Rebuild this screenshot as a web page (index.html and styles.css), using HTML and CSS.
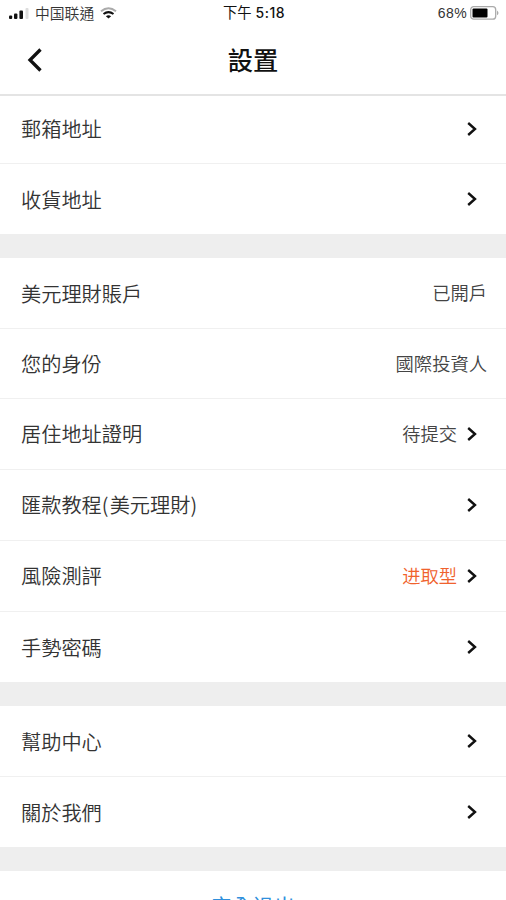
FILE: index.html
```html
<!DOCTYPE html>
<html lang="zh-Hant">
<head>
<meta charset="utf-8">
<title>設置</title>
<link rel="stylesheet" href="styles.css">
</head>
<body>
<svg class="defs" width="0" height="0"><symbol id="chev" viewBox="0 0 10 16"><path d="M1.200 2 8 8l-6.800 6" fill="none" stroke="#111" stroke-width="2.400"/></symbol></svg>
<div class="status">
  <div class="carrier">
    <svg class="signal" width="20" height="12" viewBox="0 0 20 12"><g fill="#111"><rect x="0" y="7.500" width="3.200" height="3.500" rx="1"/><rect x="5" y="5.500" width="3.400" height="5.500" rx="1"/><rect x="10.400" y="2.500" width="3.600" height="8.500" rx="1"/></g><rect x="16.500" y="0" width="3" height="11" rx="1" fill="#ddd"/></svg>
    <span class="name">中国联通</span>
    <svg width="17" height="12" viewBox="0 0 17 12"><g fill="none" stroke-width="2"><path d="M1 4.200q7.500-6 15 0" stroke="#aaa"/><path d="M3.500 7q5-3.800 10 0" stroke="#111"/></g><path d="M5.900 9.200q2.600-1.800 5.200 0L8.500 11.500z" fill="#111"/></svg>
  </div>
  <div class="time">下午 <span class="clock">5:18</span></div>
  <div class="power"><span>68%</span>
    <svg width="29" height="14" viewBox="0 0 29 14"><rect x=".7" y=".7" width="25" height="12.500" rx="3" fill="#fff" stroke="#aaa" stroke-width="1.300"/><rect x="2.500" y="2.500" width="15" height="9" rx="1" fill="#000"/><path d="M27 4.500q3 2.400 0 4.800z" fill="#aaa"/></svg>
  </div>
</div>
<header class="nav">
  <svg class="back" width="16" height="24" viewBox="0 0 16 24"><path d="M13.500 1.500 3 12l10.500 10.500" fill="none" stroke="#111" stroke-width="3.300"/></svg>
  <h1>設置</h1>
</header>
<main>
  <section>
    <div class="row h68"><span class="label">郵箱地址</span><svg class="chev"><use href="#chev"/></svg></div>
    <div class="row"><span class="label low">收貨地址</span><svg class="chev"><use href="#chev"/></svg></div>
  </section>
  <section>
    <div class="row"><span class="label low">美元理財賬戶</span><span class="value end">已開戶</span></div>
    <div class="row h70"><span class="label">您的身份</span><span class="value end">國際投資人</span></div>
    <div class="row"><span class="label">居住地址證明</span><span class="value">待提交</span><svg class="chev"><use href="#chev"/></svg></div>
    <div class="row"><span class="label">匯款教程<span class="paren">(</span>美元理財<span class="paren">)</span></span><svg class="chev"><use href="#chev"/></svg></div>
    <div class="row"><span class="label">風險測評</span><span class="value risk">进取型</span><svg class="chev"><use href="#chev"/></svg></div>
    <div class="row"><span class="label low">手勢密碼</span><svg class="chev"><use href="#chev"/></svg></div>
  </section>
  <section>
    <div class="row"><span class="label low">幫助中心</span><svg class="chev"><use href="#chev"/></svg></div>
    <div class="row"><span class="label low">關於我們</span><svg class="chev"><use href="#chev"/></svg></div>
  </section>
  <section class="logout">安全退出</section>
</main>
</body>
</html>
```

FILE: styles.css
```css
* { box-sizing: border-box; }
body { margin: 0; height: 900px; overflow: hidden; background: #fff; color: #111; font-family: "Liberation Sans", "Noto Sans CJK TC", sans-serif; }
.defs { position: absolute; }
.status { height: 26px; display: grid; grid-template-columns: 1fr auto 1fr; align-items: center; padding: 0 7px 0 9px; font-size: 14px; line-height: 26px; }
.carrier, .power { display: flex; align-items: center; }
.carrier { gap: 6px; }
.signal { margin-top: 2px; }
.name { font-family: "Noto Sans CJK SC", sans-serif; font-size: 14.8px; font-weight: 350; color: #333; }
.power { justify-content: flex-end; gap: 3px; letter-spacing: 0.4px; color: #333; }
.time { font-size: 14.3px; }
.clock { font-family: Inter, sans-serif; font-weight: 500; font-size: 14px; letter-spacing: 0.5px; }
.nav { height: 70px; display: grid; grid-template-columns: 1fr auto 1fr; align-items: center; border-bottom: 2px solid #e4e4e4; padding: 0 27px 1px; }
h1 { margin: 0; font-size: 25.3px; font-weight: 500; line-height: 36px; padding-top: 2px; color: #111; }
section { border-bottom: 24px solid #eee; }
.row { height: 71px; display: flex; align-items: center; padding: 0 29px 0 21px; border-bottom: 1px solid #f0f0f0; }
.row:last-child { border-bottom: 0; height: 70px; }
.row.h68 { height: 68px; padding-bottom: 1px; }
.h70 { height: 70px; }
.label { flex: 1; font-family: "Noto Sans CJK TC", sans-serif; font-size: 20.2px; font-weight: 350; line-height: 30px; color: #333; }
.low { padding-top: 2px; }
.paren { letter-spacing: 1.2px; }
.value { font-family: "Noto Sans CJK TC", sans-serif; font-size: 18.3px; font-weight: 350; line-height: 28px; margin-right: 10px; padding-bottom: 2px; color: #444; }
.end { margin-right: -10px; }
.risk { color: #f0622d; font-family: "Noto Sans CJK SC", sans-serif; }
.chev { width: 10px; height: 16px; }
.logout { border: 0; text-align: center; color: #3090dc; font-size: 21px; line-height: 30px; padding-top: 21px; }
```
